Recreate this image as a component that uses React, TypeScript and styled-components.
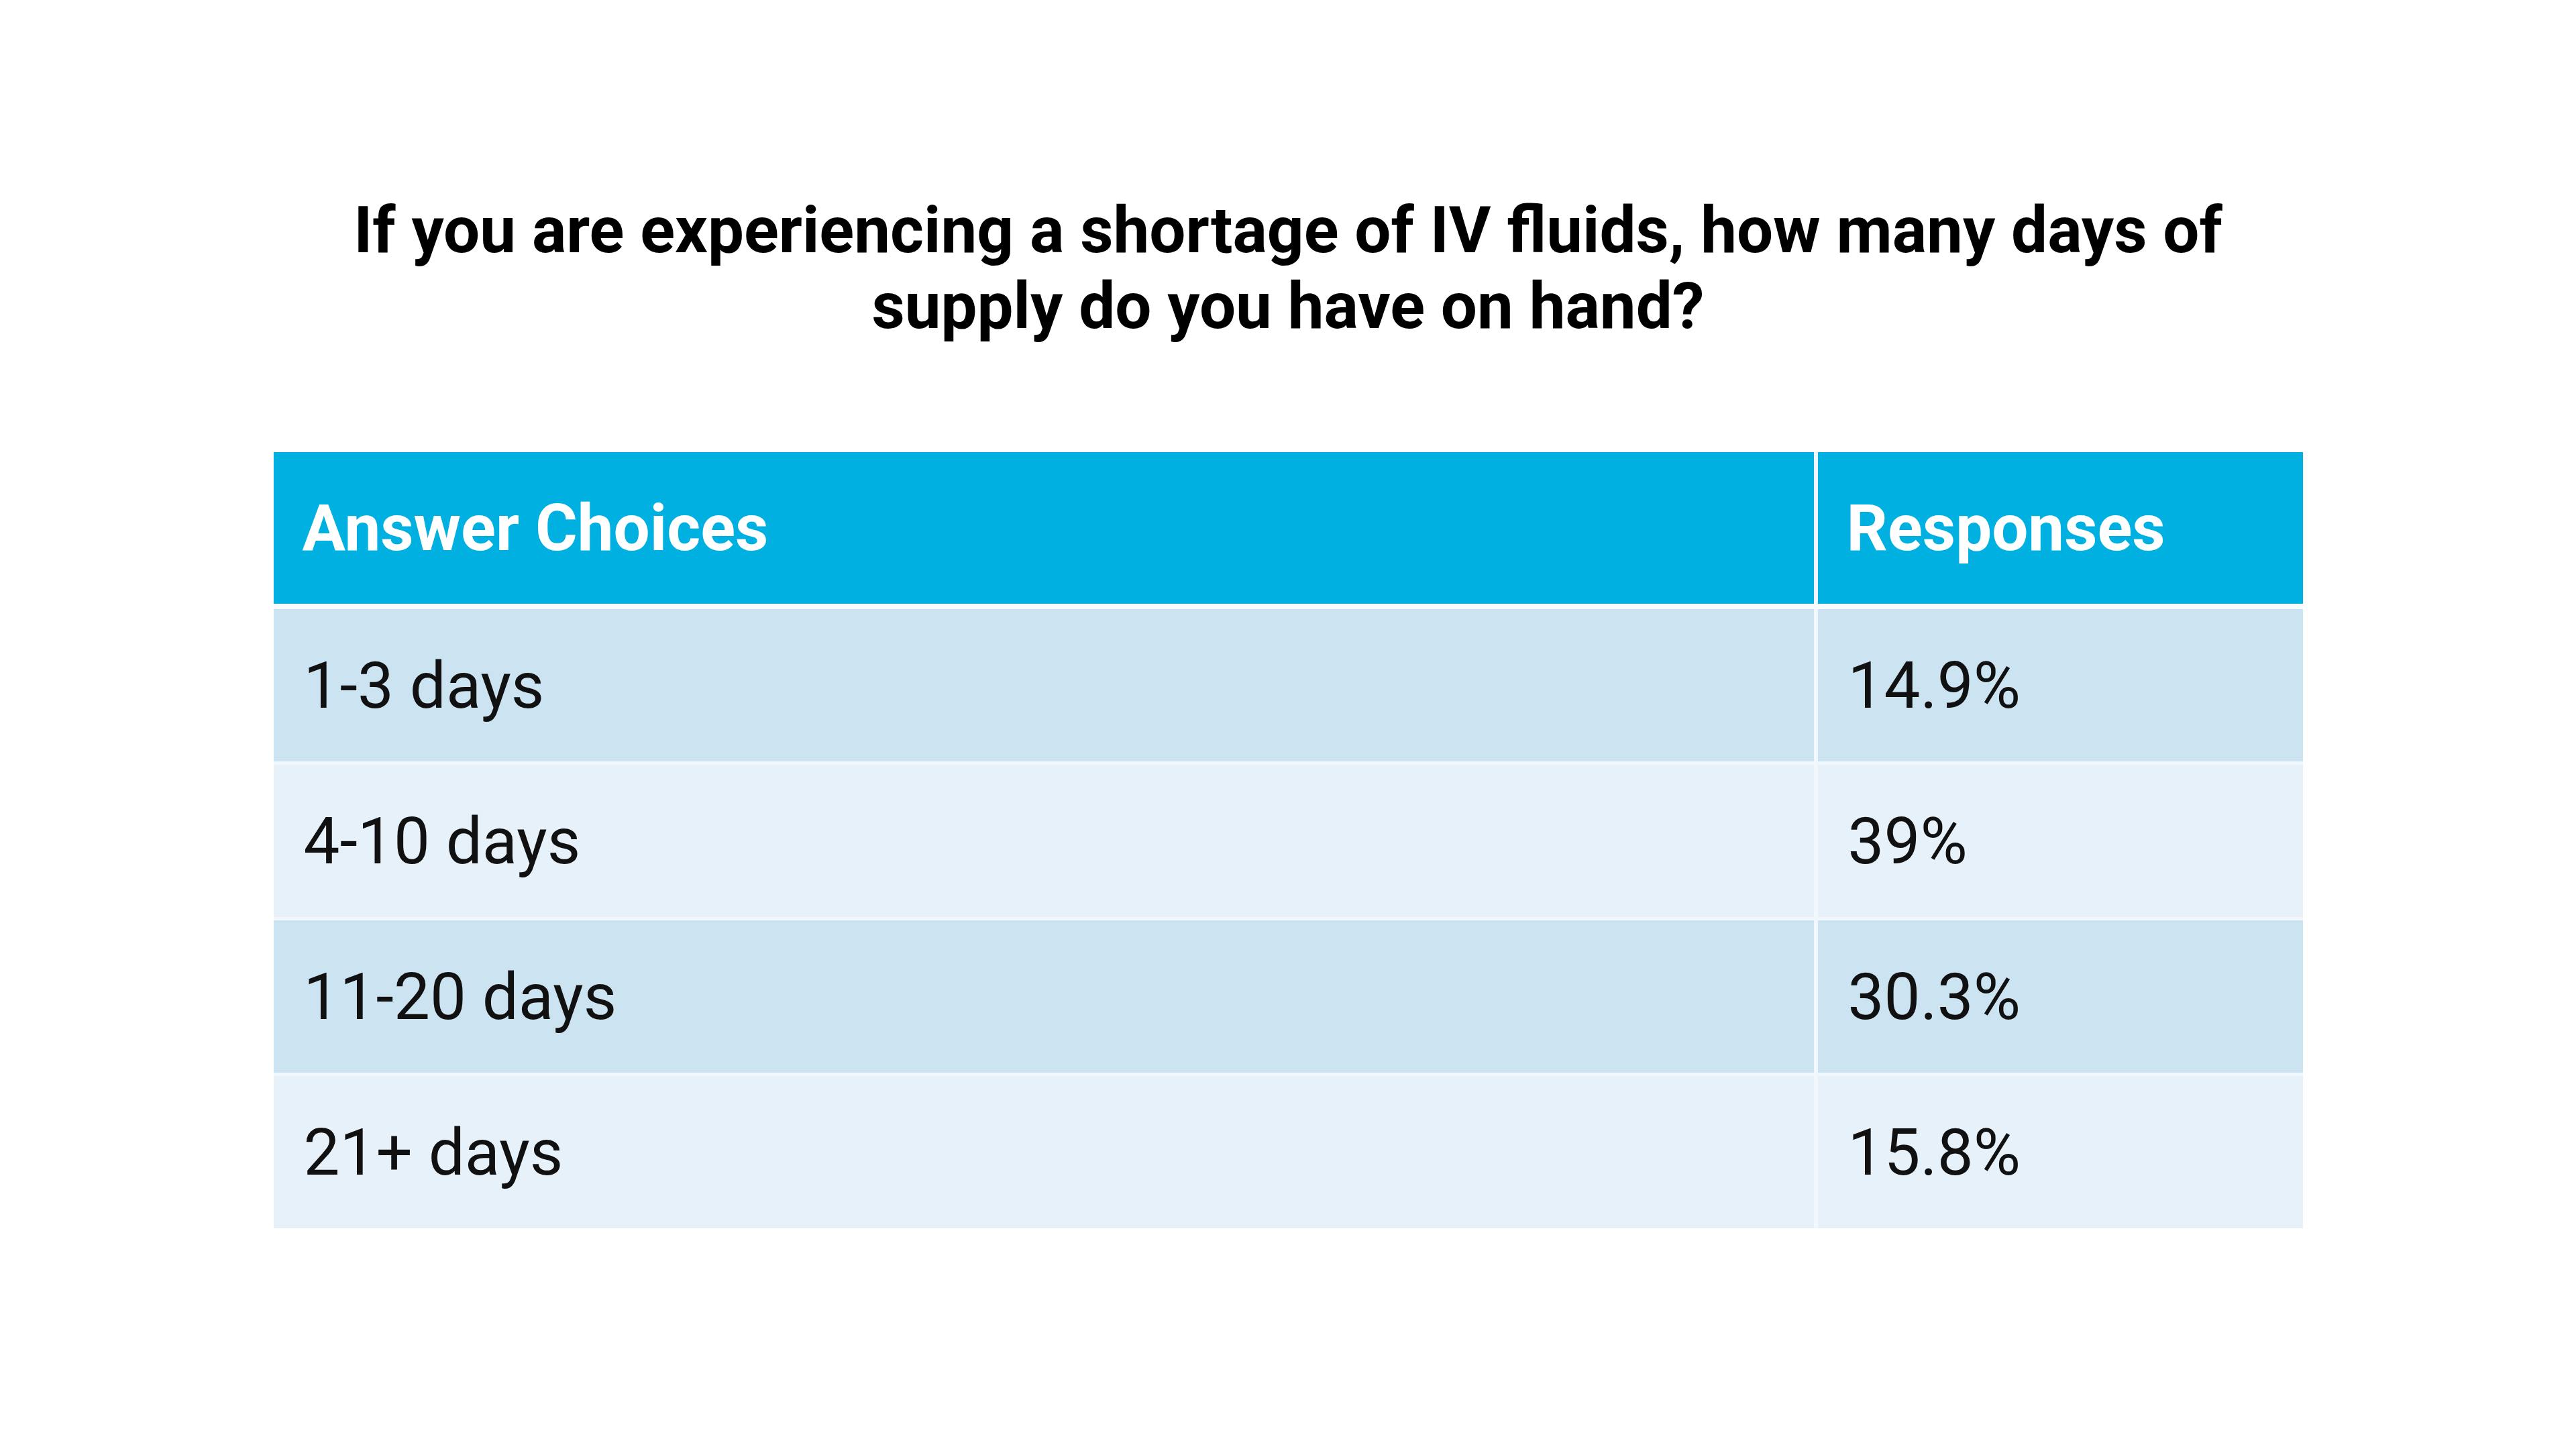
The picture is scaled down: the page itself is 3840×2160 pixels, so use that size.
import React from "react";
import styled, { createGlobalStyle } from "styled-components";

const GlobalStyle = createGlobalStyle`
  html, body {
    margin: 0;
    padding: 0;
    background: #ffffff;
  }
  body {
    font-family: Roboto, "Liberation Sans", Arial, sans-serif;
    color: #111111;
  }
`;

const rows = [
  { choice: "1-3 days", response: "14.9%" },
  { choice: "4-10 days", response: "39%" },
  { choice: "11-20 days", response: "30.3%" },
  { choice: "21+ days", response: "15.8%" },
];

const App = () => {
  return (
    <Page>
      <GlobalStyle />
      <Title>
        If you are experiencing a shortage of IV fluids, how many days of
        <br />
        supply do you have on hand?
      </Title>
      <Table>
        <HeadCell>Answer Choices</HeadCell>
        <HeadCell>Responses</HeadCell>
        <HeadGap />
        {rows.map((row, i) => (
          <React.Fragment key={row.choice}>
            {i > 0 && <RowGap />}
            <Cell $shade={i % 2 === 0}>{row.choice}</Cell>
            <Cell $shade={i % 2 === 0}>{row.response}</Cell>
          </React.Fragment>
        ))}
      </Table>
    </Page>
  );
};

const Page = styled.div`
  width: 3840px;
  height: 2160px;
  box-sizing: border-box;
  padding-top: 287px;
  display: flex;
  flex-direction: column;
  align-items: center;
`;

const Title = styled.h1`
  margin: 0;
  font-family: Roboto, "Liberation Sans", Arial, sans-serif;
  font-weight: 700;
  font-size: 96px;
  line-height: 113px;
  text-align: center;
  color: #000000;
`;

const Table = styled.div`
  margin-top: 161px;
  display: grid;
  grid-template-columns: 2296px 723px;
  column-gap: 6px;
  background: #f1f7fc;
`;

const HeadCell = styled.div`
  height: 226px;
  display: flex;
  align-items: center;
  padding-left: 43px;
  background: #00b0e1;
  color: #ffffff;
  font-weight: 700;
  font-size: 96px;
`;

const HeadGap = styled.div`
  grid-column: 1 / -1;
  height: 8px;
  background: #f8fbfe;
`;

const RowGap = styled.div`
  grid-column: 1 / -1;
  height: 5px;
`;

const Cell = styled.div<{ $shade: boolean }>`
  height: 227px;
  display: flex;
  align-items: center;
  padding-left: 45px;
  background: ${(p) => (p.$shade ? "#cce3f2" : "#e6f1fa")};
  color: #111111;
  font-weight: 400;
  font-size: 96px;
`;

export default App;
